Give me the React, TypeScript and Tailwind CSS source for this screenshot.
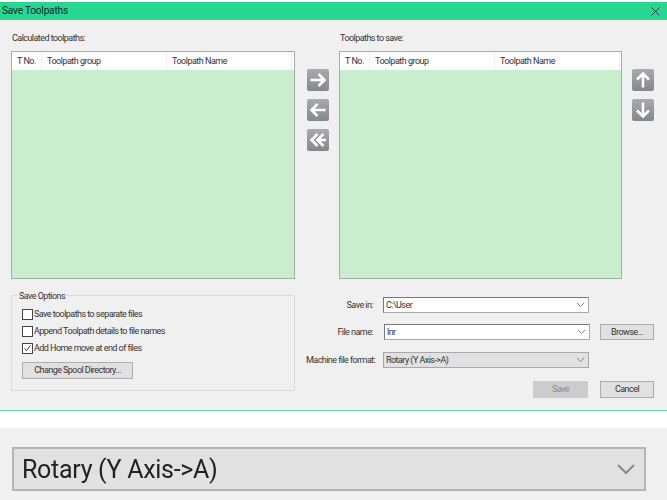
import React from "react";

const F = "font-['Roboto','Liberation_Sans',Arial,sans-serif]";

function Arrow({ kind }: { kind: "right" | "left" | "dleft" | "up" | "down" }) {
  const paths: Record<string, string> = {
    right: "M3.5 11 H17 M11.5 5 L17.5 11 L11.5 17",
    left: "M18.5 11 H5 M10.5 5 L4.5 11 L10.5 17",
    dleft: "M10.5 5 L4.5 11 L10.5 17 M16.5 5 L10.5 11 L16.5 17 M11 11 H19",
    up: "M11 18.5 V5 M5 10.5 L11 4.5 L17 10.5",
    down: "M11 3.5 V17 M5 11.5 L11 17.5 L17 11.5",
  };
  return (
    <div className="w-[22px] h-[22px] rounded-[2px] bg-gradient-to-b from-[#a9abb3] to-[#85878f]">
      <svg width="22" height="22" viewBox="0 0 22 22" fill="none" stroke="#ffffff" strokeWidth="2.6" strokeLinecap="butt" strokeLinejoin="miter">
        <path d={paths[kind]} />
      </svg>
    </div>
  );
}

function ToolTable({ width }: { width: string }) {
  return (
    <div className={`${width} h-[228px] border border-[#9fb0a8] bg-[#c8eecd] flex flex-col`}>
      <div className="h-[18px] bg-white flex items-center tracking-[-0.5px]">
        <div className="w-[30px] h-full flex items-center pl-[5px] border-r border-[#eeeeee]">T No.</div>
        <div className="w-[125px] h-full flex items-center pl-[5px] border-r border-[#eeeeee]">Toolpath group</div>
        <div className="w-[125px] h-full flex items-center pl-[5px] border-r border-[#eeeeee]">Toolpath Name</div>
      </div>
    </div>
  );
}

function Check({ label, checked }: { label: string; checked?: boolean }) {
  return (
    <div className="flex items-center h-[17px] gap-[1px]">
      <div className="w-[11px] h-[11px] border border-[#444] bg-white flex items-center justify-center">
        {checked && (
          <svg width="9" height="9" viewBox="0 0 9 9" fill="none" stroke="#333" strokeWidth="1">
            <path d="M1.5 4.5 L3.5 6.5 L7.5 1.5" />
          </svg>
        )}
      </div>
      <span>{label}</span>
    </div>
  );
}

function Chevron({ size = 9, color = "#777" }: { size?: number; color?: string }) {
  return (
    <svg width={size} height={size * 0.6} viewBox="0 0 10 6" fill="none" stroke={color} strokeWidth="1">
      <path d="M1 1 L5 5 L9 1" />
    </svg>
  );
}

function Combo({ text, gray }: { text: string; gray?: boolean }) {
  return (
    <div className={`w-[206px] h-[16px] border border-[#a8a8a8] flex items-center justify-between pl-[2px] pr-[3px] ${gray ? "bg-[#e1e1e1]" : "bg-white border-t-[#777] border-l-[#777]"}`}>
      <span>{text}</span>
      <Chevron />
    </div>
  );
}

export default function App() {
  return (
    <div className={`${F} w-[667px] h-[500px] bg-white flex flex-col pt-[2px] overflow-hidden text-[9px] tracking-[-0.55px] leading-none text-[#333]`}>
      <div className="h-[18px] bg-[#27d68f] flex items-center justify-between pl-[2px] pr-[7px] text-[10px] tracking-[-0.15px] text-[#123]">
        <span>Save Toolpaths</span>
        <svg width="9" height="9" viewBox="0 0 9 9" stroke="#234" strokeWidth="0.9">
          <path d="M0.5 0.5 L8.5 8.5 M8.5 0.5 L0.5 8.5" />
        </svg>
      </div>

      <div className="h-[390px] bg-[#f0f0f0] flex flex-col pl-[11px]">
        <div className="flex pt-[14px]">
          <div className="flex flex-col">
            <div className="h-[17px] pl-[1px]">Calculated toolpaths:</div>
            <ToolTable width="w-[284px]" />
          </div>
          <div className="flex flex-col gap-[8px] pt-[35px] pl-[12px] w-[44px]">
            <Arrow kind="right" />
            <Arrow kind="left" />
            <Arrow kind="dleft" />
          </div>
          <div className="flex flex-col">
            <div className="h-[17px] pl-[1px]">Toolpaths to save:</div>
            <ToolTable width="w-[283px]" />
          </div>
          <div className="flex flex-col gap-[8px] pt-[35px] pl-[10px]">
            <Arrow kind="up" />
            <Arrow kind="down" />
          </div>
        </div>

        <div className="flex mt-[16px]">
          <div className="relative w-[284px] h-[96px] border border-[#dcdcdc] pt-[10px] pl-[10px]">
            <span className="absolute -top-[4px] left-[6px] bg-[#f0f0f0] px-[1px]">Save Options</span>
            <Check label="Save toolpaths to separate files" />
            <Check label="Append Toolpath details to file names" />
            <Check label="Add Home move at end of files" checked />
            <div className="mt-[5px] w-[111px] h-[17px] bg-[#e1e1e1] border border-[#adadad] flex items-center justify-center">Change Spool Directory...</div>
          </div>
          <div className="flex flex-col ml-[10px]">
            <div className="flex items-center h-[16px] mt-[2px]">
              <div className="w-[78px] text-right pr-[10px] shrink-0 whitespace-nowrap">Save in:</div>
              <Combo text="C:\User" />
            </div>
            <div className="flex items-center h-[16px] mt-[11px]">
              <div className="w-[79px] text-right pr-[11px] shrink-0 whitespace-nowrap">File name:</div>
              <Combo text="lnr" />
              <div className="ml-[10px] w-[54px] h-[16px] bg-[#e1e1e1] border border-[#adadad] flex items-center justify-center">Browse...</div>
            </div>
            <div className="flex items-center h-[16px] mt-[12px]">
              <div className="w-[78px] pl-[1px] pr-[10px] shrink-0 whitespace-nowrap">Machine file format:</div>
              <Combo text="Rotary (Y Axis->A)" gray />
            </div>
            <div className="flex justify-end gap-[12px] mt-[13px] w-[349px]">
              <div className="w-[55px] h-[17px] bg-[#cccccc] flex items-center justify-center text-[#8a8a8a]">Save</div>
              <div className="w-[54px] h-[17px] bg-[#e1e1e1] border border-[#adadad] flex items-center justify-center">Cancel</div>
            </div>
          </div>
        </div>
      </div>

      <div className="h-[1px] bg-[#5fdcaa]" />
      <div className="h-[17px]" />

      <div className="flex-1 bg-[#f0f0f0] pt-[19px] pl-[12px]">
        <div className="w-[634px] h-[44px] bg-[#e1e1e1] border-2 border-[#b4b4b4] flex items-center justify-between pl-[8px] pr-[8px] text-[25px] tracking-[-0.3px] text-[#222] blur-[0.4px]">
          <span>Rotary (Y Axis-&gt;A)</span>
          <Chevron size={20} color="#888" />
        </div>
      </div>
    </div>
  );
}
